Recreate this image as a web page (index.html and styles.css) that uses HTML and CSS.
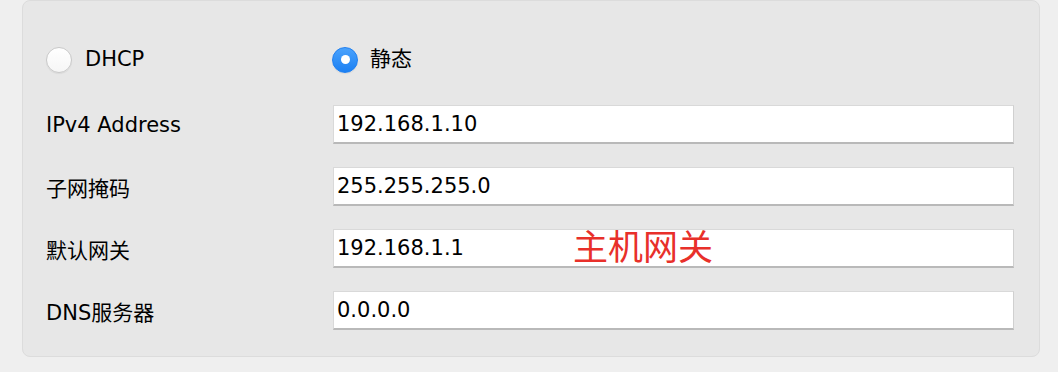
FILE: index.html
```html
<!DOCTYPE html>
<html lang="zh-CN">
<head>
<meta charset="utf-8">
<title>网络设置</title>
<link rel="stylesheet" href="styles.css">
</head>
<body>
<div class="panel">
  <label class="radio"><span class="dot"></span><span class="rlabel">DHCP</span></label>
  <label class="radio radio-static"><span class="dot on"></span><span class="rlabel">静态</span></label>

  <div class="label">IPv4 Address</div>
  <div class="field"><div class="input">192.168.1.10</div></div>

  <div class="label">子网掩码</div>
  <div class="field"><div class="input">255.255.255.0</div></div>

  <div class="label">默认网关</div>
  <div class="field"><div class="input">192.168.1.1</div><span class="note">主机网关</span></div>

  <div class="label">DNS服务器</div>
  <div class="field"><div class="input">0.0.0.0</div></div>
</div>
</body>
</html>
```
FILE: styles.css
```css
html, body {
  margin: 0;
  padding: 0;
  background: #efefef;
}
body {
  font-family: "DejaVu Sans", "Noto Sans CJK SC", sans-serif;
  font-size: 21px;
  color: #000;
  height: 372px;
  overflow: hidden;
}
.panel {
  margin-left: 22px;
  width: 1018px;
  box-sizing: border-box;
  border: 1px solid #dcdcdc;
  border-radius: 8px;
  background: #e7e7e7;
  padding: 36px 25px 26px 23px;
  display: grid;
  grid-template-columns: 287px 1fr;
  grid-template-rows: 45px repeat(4, 39px);
  row-gap: 23px;
}
.radio {
  display: flex;
  align-items: center;
  gap: 13px;
}
.radio-static {
  margin-left: -1px;
  gap: 12px;
}
.dot {
  width: 26px;
  height: 26px;
  box-sizing: border-box;
  border-radius: 50%;
  border: 1px solid #c9c9c9;
  background: linear-gradient(#ffffff, #f6f6f6);
  box-shadow: 0 1px 1px rgba(0,0,0,0.06);
  position: relative;
}
.dot.on {
  border: 1px solid #1f7ff0;
  background: linear-gradient(#4aa2fc, #1b80f3);
}
.dot.on::after {
  content: "";
  position: absolute;
  left: 50%;
  top: 50%;
  width: 9px;
  height: 9px;
  margin: -4.5px 0 0 -4.5px;
  border-radius: 50%;
  background: #fff;
}
.rlabel {
  line-height: 1;
}
.label {
  display: flex;
  align-items: center;
}
.field {
  position: relative;
}
.input {
  height: 39px;
  box-sizing: border-box;
  background: #fff;
  border-top: 1px solid #d9d9d9;
  border-left: 1px solid #d9d9d9;
  border-right: 1px solid #d0d0d0;
  border-bottom: 2px solid #b9b9b9;
  padding-left: 3px;
  display: flex;
  align-items: center;
  color: #000;
}
.note {
  position: absolute;
  left: 240px;
  top: -2px;
  font-family: "Noto Sans CJK SC", sans-serif;
  font-size: 35px;
  line-height: 35px;
  color: #e8302a;
}
```
